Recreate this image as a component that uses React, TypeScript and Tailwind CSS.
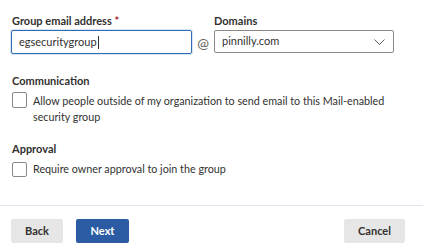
export default function App() {
  return (
    <div className="w-[423px] h-[250px] bg-white text-[#323130] font-['Lato',sans-serif] overflow-hidden">
      <div className="px-[11px] pt-[13px]">
        <div className="flex items-end">
          <div className="w-[181px]">
            <div className="text-[11px] font-bold leading-[16px] mb-[1px] pl-[1px]">
              Group email address <span className="text-[#a4262c]">*</span>
            </div>
            <div className="h-[24px] border border-[#2f6cb5] rounded-[2px] flex items-center px-[7px] text-[11px] shadow-[0_0_0_1px_#d8e4f3]">
              egsecuritygroup<span className="w-px h-[13px] bg-[#323130] ml-px" />
            </div>
          </div>
          <div className="w-[22px] h-[24px] flex items-center justify-center text-[14px] text-[#605e5c]">@</div>
          <div className="w-[180px]">
            <div className="text-[11px] font-bold leading-[16px] mb-[1px]">Domains</div>
            <div className="h-[23px] mb-px border border-[#8a8886] rounded-[2px] flex items-center justify-between pl-[7px] pr-[8px] text-[11px]">
              <span>pinnilly.com</span>
              <svg width="11" height="6" viewBox="0 0 11 6" fill="none" stroke="#605e5c" strokeWidth="1">
                <path d="M0.5 0.5 L5.5 5.5 L10.5 0.5" />
              </svg>
            </div>
          </div>
        </div>

        <div className="mt-[19px] text-[11px] font-bold leading-[16px] pl-[1px]">Communication</div>
        <label className="mt-[3px] flex gap-[6px] pl-[1px]">
          <span className="block w-[15px] h-[16px] shrink-0 border border-[#8a8886] rounded-[2px]" />
          <span className="text-[10.75px] leading-[16px] pt-[1px]">
            Allow people outside of my organization to send email to this Mail-enabled
            <br />
            security group
          </span>
        </label>

        <div className="mt-[16px] text-[11px] font-bold leading-[16px] pl-[1px]">Approval</div>
        <label className="mt-[4px] flex items-center gap-[6px] pl-[1px]">
          <span className="block w-[15px] h-[15px] shrink-0 border border-[#8a8886] rounded-[2px]" />
          <span className="text-[10.75px] leading-[16px]">Require owner approval to join the group</span>
        </label>
      </div>

      <div className="mt-[28px] h-px bg-[#dce4ef]" />

      <div className="flex items-center px-[11px] pt-[13px]">
        <button className="w-[52px] h-[24px] rounded-[2px] bg-[#e6e6e6] text-[11px] font-bold text-[#323130]">Back</button>
        <button className="ml-[13px] w-[53px] h-[24px] rounded-[2px] bg-[#2b5ca3] text-[11px] font-bold text-white">Next</button>
        <button className="ml-auto mr-[7px] w-[61px] h-[24px] rounded-[2px] bg-[#e6e6e6] text-[11px] font-bold text-[#323130]">Cancel</button>
      </div>
    </div>
  );
}
